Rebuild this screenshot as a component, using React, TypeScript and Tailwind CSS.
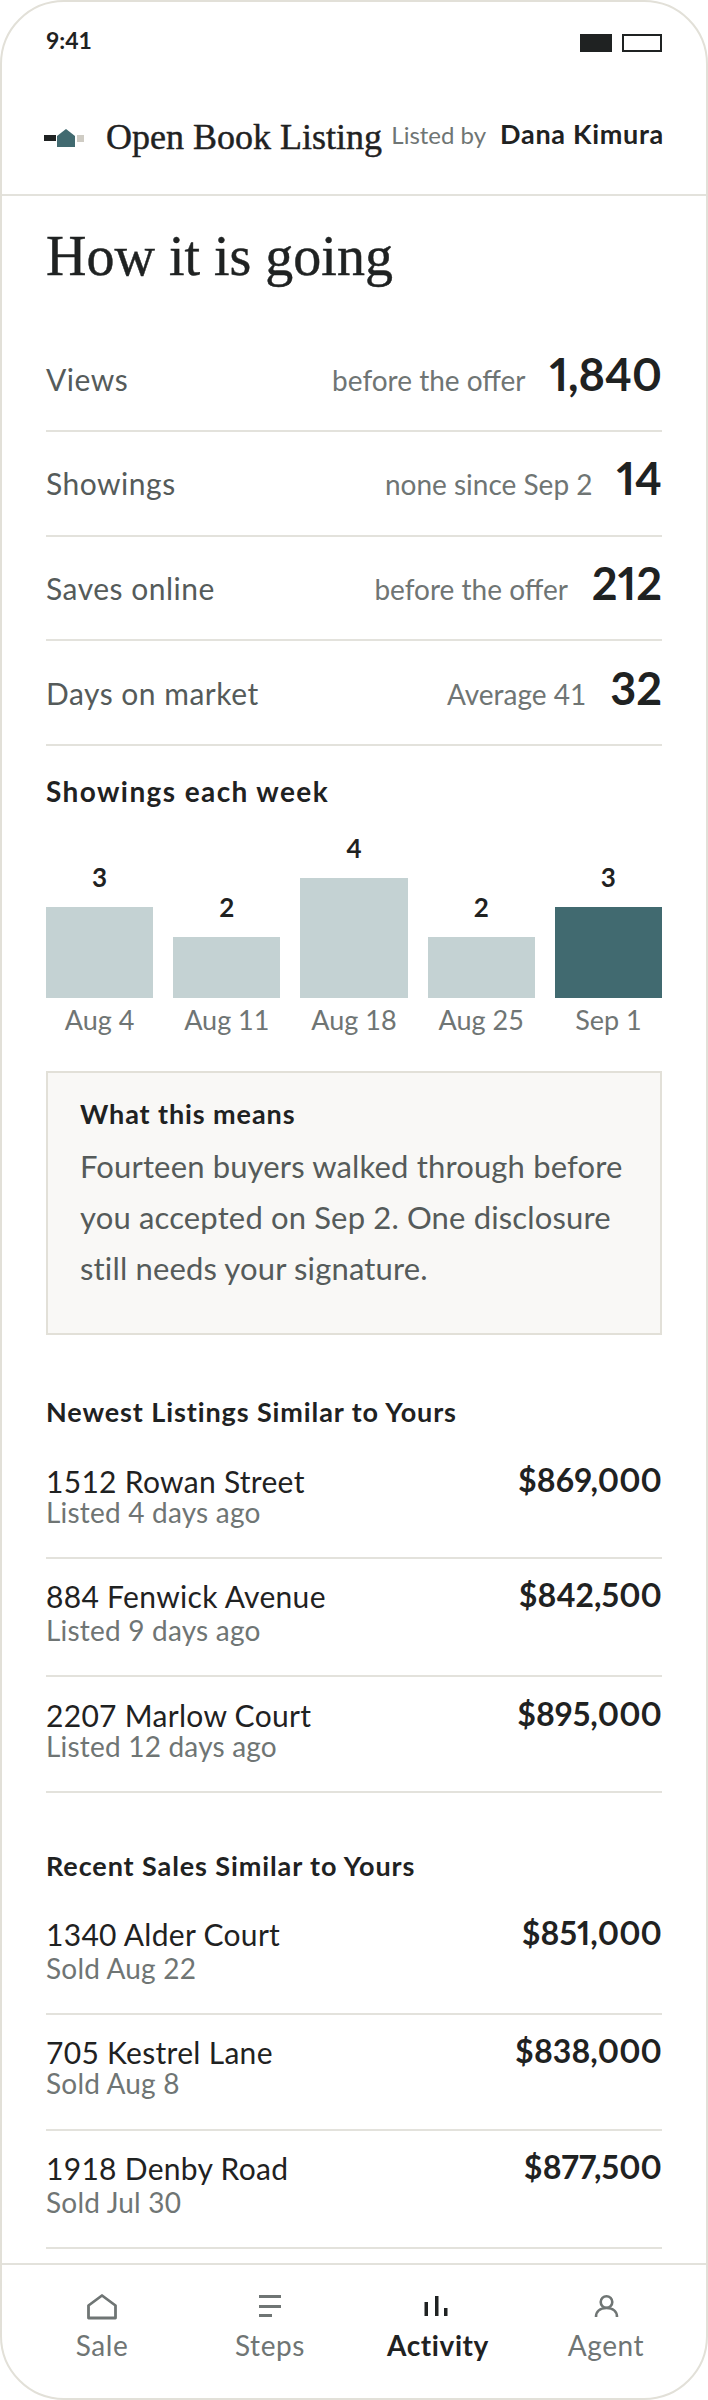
const sans = "font-['Lato','Liberation_Sans',sans-serif]"
const serif = "font-['Liberation_Serif',serif] [-webkit-text-stroke:0.45px_#1f2222]"

const stats = [
  { label: 'Views', note: 'before the offer', value: '1,840' },
  { label: 'Showings', note: 'none since Sep 2', value: '14' },
  { label: 'Saves online', note: 'before the offer', value: '212' },
  { label: 'Days on market', note: 'Average 41', value: '32' },
]

const weeks = [
  { week: 'Aug 4', count: 3, height: 'h-[91px]', bar: 'bg-[#c4d2d3]' },
  { week: 'Aug 11', count: 2, height: 'h-[61px]', bar: 'bg-[#c4d2d3]' },
  { week: 'Aug 18', count: 4, height: 'h-[120px]', bar: 'bg-[#c4d2d3]' },
  { week: 'Aug 25', count: 2, height: 'h-[61px]', bar: 'bg-[#c4d2d3]' },
  { week: 'Sep 1', count: 3, height: 'h-[91px]', bar: 'bg-[#416a70]' },
]

const listings = [
  { name: '1512 Rowan Street', sub: 'Listed 4 days ago', price: '$869,000', row: 'h-[117px] pt-[22.4px]', gap: 'mt-0' },
  { name: '884 Fenwick Avenue', sub: 'Listed 9 days ago', price: '$842,500', row: 'h-[118px] pt-[20.4px]', gap: 'mt-[2.8px]' },
  { name: '2207 Marlow Court', sub: 'Listed 12 days ago', price: '$895,000', row: 'h-[116px] pt-[20.9px]', gap: 'mt-[0.8px]' },
]

const sales = [
  { name: '1340 Alder Court', sub: 'Sold Aug 22', price: '$851,000', row: 'h-[119px] pt-[21.4px]', gap: 'mt-[2.8px]' },
  { name: '705 Kestrel Lane', sub: 'Sold Aug 8', price: '$838,000', row: 'h-[116px] pt-[20.4px]', gap: 'mt-0' },
  { name: '1918 Denby Road', sub: 'Sold Jul 30', price: '$877,500', row: 'h-[118px] pt-[20.4px]', gap: 'mt-[2.8px]' },
]

function PropertyRows({ rows }: { rows: typeof listings }) {
  return (
    <div className="mt-[13.5px]">
      {rows.map((row) => (
        <div
          key={row.name}
          className={`flex justify-between border-b-2 border-[#e3e2dc] ${row.row}`}
        >
          <div>
            <p className="text-[30px] leading-[34px] tracking-[0.3px] text-[#1f2222]">
              {row.name}
            </p>
            <p className={`text-[28px] leading-[28px] tracking-[0.2px] text-[#6f7574] ${row.gap}`}>
              {row.sub}
            </p>
          </div>
          <p className="text-[32px] leading-[32px] font-bold tracking-[0.1px] text-[#1f2222] proportional-nums">
            {row.price}
          </p>
        </div>
      ))}
    </div>
  )
}

function NavIcon({ name }: { name: string }) {
  if (name === 'Sale') {
    return (
      <svg width="32" height="28" viewBox="0 0 32 28" fill="none" stroke="#6f7574" strokeWidth="2.800" strokeLinejoin="round">
        <path d="M2.500 11.500 16 1.500l13.500 10V24H2.500Z" />
      </svg>
    )
  }
  if (name === 'Steps') {
    return (
      <svg width="32" height="28" viewBox="0 0 32 28" fill="#6f7574">
        <rect x="5" y="1" width="22" height="3" />
        <rect x="5" y="11" width="22" height="3" />
        <rect x="5" y="20" width="13" height="3" />
      </svg>
    )
  }
  if (name === 'Activity') {
    return (
      <svg width="32" height="28" viewBox="0 0 32 28" fill="#1f2222">
        <rect x="2.500" y="8" width="3.500" height="14" />
        <rect x="13" y="2" width="3.500" height="20" />
        <rect x="22" y="14" width="3.500" height="8" />
      </svg>
    )
  }
  return (
    <svg width="32" height="28" viewBox="0 0 32 28" fill="none" stroke="#6f7574" strokeWidth="2.600">
      <circle cx="16.500" cy="8" r="5.800" />
      <path d="M6 23c0-5.500 4-9 10.500-9s10.500 3.500 10.500 9" />
    </svg>
  )
}

export default function App() {
  return (
    <div className={`${sans} flex h-[2400px] w-[708px] flex-col overflow-hidden rounded-[64px] border-2 border-[#e2e0d8] bg-white text-[#1f2222]`}>
      <div className="flex h-[70px] items-start justify-between px-[44px] pt-[25px]">
        <span className="text-[23px] leading-[26px] font-bold">9:41</span>
        <div className="mt-[7px] flex gap-[10px]">
          <div className="h-[18px] w-[32px] bg-[#1f2222]" />
          <div className="h-[18px] w-[40px] border-2 border-[#1f2222]" />
        </div>
      </div>

      <header className="flex h-[124px] items-start justify-between border-b-2 border-[#e3e2dc] px-[42px] pt-[45px]">
        <div className="flex items-start gap-[22px]">
          <svg width="40" height="18" viewBox="0 0 40 18" className="mt-[12px]">
            <rect x="0" y="6" width="12" height="6" fill="#1f2222" />
            <path d="M13 7 22 0l9 7v11H13Z" fill="#416a70" />
            <rect x="33" y="6" width="7" height="7" fill="#cfccc4" />
          </svg>
          <span className={`${serif} text-[36px] leading-[40px]`}>Open Book Listing</span>
        </div>
        <div className="mt-[1.5px] flex items-baseline gap-[14px]">
          <span className="text-[24px] leading-[30px] text-[#6f7574]">Listed by</span>
          <span className="text-[27px] leading-[30px] font-bold tracking-[0.7px]">Dana Kimura</span>
        </div>
      </header>

      <main className="flex-1 px-[44px]">
        <h1 className={`${serif} pt-[30px] text-[56px] leading-[60px] font-normal`}>How it is going</h1>

        <div className="mt-[41.3px]">
          {stats.map((stat) => (
            <div
              key={stat.label}
              className="flex h-[104.67px] items-baseline justify-between border-b-2 border-[#e3e2dc] pt-[22.5px]"
            >
              <span className="text-[30px] leading-[48px] tracking-[0.5px] text-[#555b5a]">{stat.label}</span>
              <div className="flex items-baseline gap-[24px]">
                <span className="text-[28px] leading-[48px] text-[#6f7574]">{stat.note}</span>
                <span className="mb-[1px] text-[45px] leading-[48px] font-bold proportional-nums">{stat.value}</span>
              </div>
            </div>
          ))}
        </div>

        <h2 className="mt-[29.2px] text-[28px] leading-[32px] font-bold tracking-[1.400px]">Showings each week</h2>

        <div className="mt-[25.5px] flex h-[165px] items-end gap-[20px]">
          {weeks.map((item) => (
            <div key={item.week} className="flex flex-1 flex-col items-center">
              <span className="mb-[15px] text-[26px] leading-[30px] font-bold">{item.count}</span>
              <div className={`w-full ${item.height} ${item.bar}`} />
            </div>
          ))}
        </div>
        <div className="mt-[6.5px] flex gap-[20px]">
          {weeks.map((item) => (
            <span key={item.week} className="flex-1 text-center text-[27px] leading-[32px] text-[#6f7574]">
              {item.week}
            </span>
          ))}
        </div>

        <section className="mt-[34.5px] h-[264px] border-2 border-[#e2e0d8] bg-[#f9f8f6] px-[32px] pt-[24px]">
          <h3 className="text-[27px] leading-[34px] font-bold tracking-[0.9px]">What this means</h3>
          <p className="mt-[10px] text-[31px] leading-[51px] tracking-[0.15px] text-[#555b5a]">
            Fourteen buyers walked through before you accepted on Sep 2. One disclosure still needs your signature.
          </p>
        </section>

        <h2 className="mt-[61.5px] text-[27px] leading-[32px] font-bold tracking-[0.9px]">Newest Listings Similar to Yours</h2>
        <PropertyRows rows={listings} />

        <h2 className="mt-[57.5px] text-[27px] leading-[32px] font-bold tracking-[0.9px]">Recent Sales Similar to Yours</h2>
        <PropertyRows rows={sales} />
      </main>

      <nav className="grid h-[135px] grid-cols-4 border-t-2 border-[#e3e2dc] px-[16px] pt-[29px]">
        {['Sale', 'Steps', 'Activity', 'Agent'].map((name) => (
          <div key={name} className="flex flex-col items-center">
            <NavIcon name={name} />
            <span
              className={
                name === 'Activity'
                  ? 'mt-[6px] text-[28px] leading-[34px] font-bold tracking-[0.6px] text-[#1f2222]'
                  : 'mt-[6px] text-[28px] leading-[34px] tracking-[0.6px] text-[#6f7574]'
              }
            >
              {name}
            </span>
          </div>
        ))}
      </nav>
    </div>
  )
}
